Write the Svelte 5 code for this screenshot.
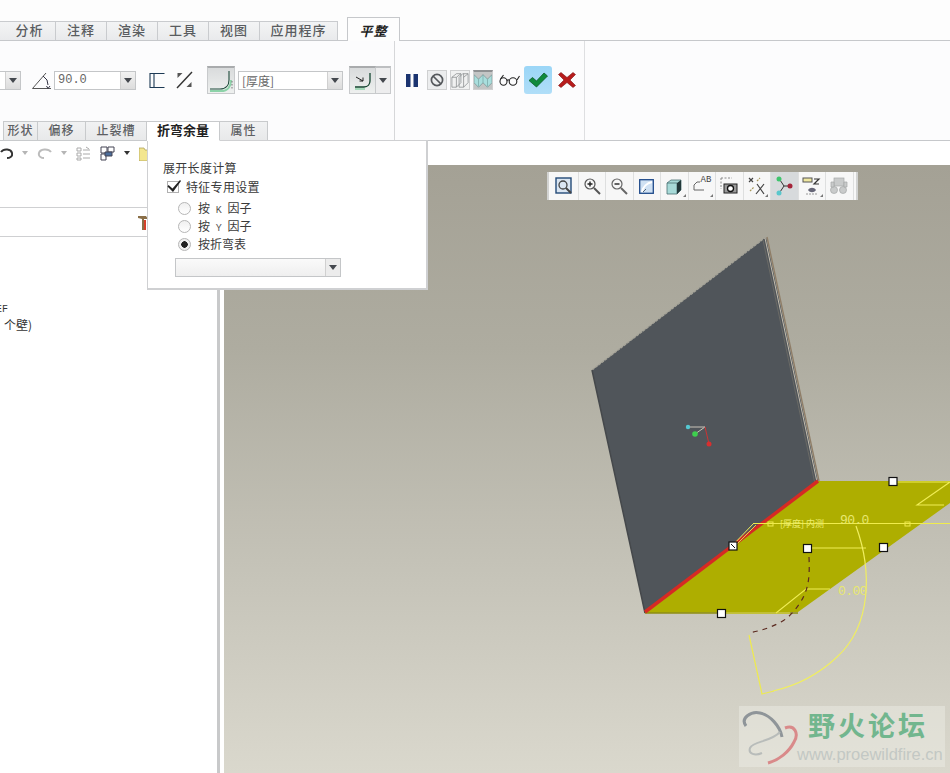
<script>
  const topTabs = [
    { label: '分析', cls: 'first' },
    { label: '注释', cls: '' },
    { label: '渲染', cls: '' },
    { label: '工具', cls: '' },
    { label: '视图', cls: '' },
    { label: '应用程序', cls: 'wide' }
  ];
  const subTabs = [
    { label: '形状', cls: 'cut' },
    { label: '偏移', cls: '' },
    { label: '止裂槽', cls: '' },
    { label: '折弯余量', cls: 'active' },
    { label: '属性', cls: '' }
  ];
</script>

{#snippet arrow()}
  <svg class="arrow" width="8" height="5" viewBox="0 0 8 5"><path d="M0 0h8L4 5z" fill="#44484e" /></svg>
{/snippet}

{#snippet tiny(color)}
  <svg class="arrow" width="6" height="4" viewBox="0 0 6 4"><path d="M0 0h6L3 4z" fill={color} /></svg>
{/snippet}

<div class="page">
  <div class="tabbar">
    {#each topTabs as tab}
      <div class="tab {tab.cls}">{tab.label}</div>
    {/each}
    <div class="tab current">平整</div>
  </div>

  <div class="ribbon">
    <div class="group main">
      <div class="controls">
        <div class="combo stub"><span class="drop">{@render arrow()}</span></div>
        <svg class="angle" width="20" height="20" viewBox="0 0 20 20" fill="none" stroke="#555">
          <path d="M0.500 18.500H19M0.500 18.500L14 3" />
          <path d="M11 6l4 4 1 5" stroke="#334" />
          <path d="M14.500 16l1.500 2.500 2-2.500" stroke="#334" />
        </svg>
        <div class="combo angle-box"><span class="value mono">90.0</span><span class="drop">{@render arrow()}</span></div>
        <svg class="flip-a" width="17" height="17" viewBox="0 0 17 17" fill="none" stroke="#1d3a55" stroke-width="1.100">
          <path d="M15.500 1.500H1v14h14.500M5 1.500v14" />
        </svg>
        <svg class="flip-b" width="17" height="18" viewBox="0 0 17 18" fill="none" stroke="#333">
          <path d="M1 17L16 1" stroke-width="1.400" />
          <path d="M1.500 2h5L1.500 7z" fill="#555" stroke="none" />
          <path d="M15.500 16h-5l5-5z" fill="#555" stroke="none" />
        </svg>
        <div class="toggle wide-t">
          <svg width="24" height="22" viewBox="0 0 24 22" fill="none">
            <path d="M1 19h10c6 0 9-4 9-9V1" stroke="#1d4a3a" stroke-width="1.100" />
            <path d="M1 21h11c7 0 10-5 10-11" stroke="#8cd2a8" stroke-width="2" />
            <path d="M20 1v8" stroke="#777" stroke-dasharray="1.500 1.500" transform="translate(3 10)" />
          </svg>
        </div>
        <div class="combo thick"><span class="value">[厚度]</span><span class="drop">{@render arrow()}</span></div>
        <div class="split">
          <div class="toggle split-main">
            <svg width="18" height="18" viewBox="0 0 18 18" fill="none">
              <path d="M1 15h9c4 0 6-3 6-6V1" stroke="#12442e" stroke-width="1.300" />
              <path d="M2 5l7 4M9 9V5.500M9 9H5.500" stroke="#222" />
              <path d="M1 17h10" stroke="#8cd2a8" stroke-width="1.500" />
            </svg>
          </div>
          <span class="split-drop">{@render arrow()}</span>
        </div>
      </div>
      <div class="subtabs">
        {#each subTabs as tab}
          <div class="subtab {tab.cls}">{tab.label}</div>
        {/each}
      </div>
    </div>

    <div class="group actions">
      <svg class="pause" width="12" height="13" viewBox="0 0 12 13"><path d="M0 0h4.500v13H0zM7.500 0H12v13H7.500z" fill="#1b3470" /></svg>
      <div class="act-btn plain">
        <svg width="14" height="14" viewBox="0 0 14 14" fill="none" stroke="#55585c" stroke-width="1.700"><circle cx="7" cy="7" r="5.600" /><path d="M3 3l8 8" /></svg>
      </div>
      <div class="act-btn plain faint">
        <svg width="20" height="18" viewBox="0 0 20 18" fill="none" stroke="#85888a" stroke-width=".8">
          <path d="M1 6l5-4h5v10l-5 5H1zM1 6h5v11M6 6l5-4M9 6l4-4h6v10l-5 5H9zM13 6h0M14 2v15M14 6l5-4" />
        </svg>
      </div>
      <div class="act-btn pressed">
        <svg width="20" height="15" viewBox="0 0 20 15"><path d="M0 1l5 5 5-5 5 5 5-5v9l-5 5-5-5-5 5-5-5z" fill="#a9dedd" stroke="#6f8c8c" stroke-width=".7" /><path d="M5 6v8M10 1v9M15 6v8" stroke="#6f9c9c" stroke-width=".7" /></svg>
      </div>
      <svg class="glasses" width="21" height="12" viewBox="0 0 21 12" fill="none" stroke="#222" stroke-width="1.100">
        <ellipse cx="4.500" cy="7.500" rx="3.500" ry="3.700" /><ellipse cx="14" cy="7.500" rx="3.800" ry="3.700" />
        <path d="M8 6.500c1-1 1.500-1 2.300 0M1.500 5l3-4M18 6l2.500-4" />
      </svg>
      <div class="ok">
        <svg width="20" height="16" viewBox="0 0 20 16"><path d="M1 8.500l3.500-3 4 3.500L16 1l3.500 3L8.500 15z" fill="#0f8a3c" stroke="#0b5a2a" stroke-width=".8" /></svg>
      </div>
      <svg class="cancel" width="18" height="16" viewBox="0 0 18 16"><path d="M0.500 2.500L3 .5l6 5 6-5 2.500 2-5.500 5.500 5.500 5.500L15 15.500l-6-5-6 5-2.500-2L6 8z" fill="#b81c1c" stroke="#7e1010" stroke-width=".6" /></svg>
    </div>
    <div class="group rest"></div>
  </div>

  <div class="work">
    <aside class="left">
      <div class="quick">
        <svg width="13" height="11" viewBox="0 0 13 11" fill="none" stroke="#333" stroke-width="2"><path d="M1 4c3-4 10-3 11 1s-3 5-5 5" /></svg>
        {@render tiny('#b5b5b5')}
        <svg width="15" height="11" viewBox="0 0 15 11" fill="none" stroke="#bcbcbc" stroke-width="2"><path d="M14 4C11 0 3 1 2 5s3 5 5 5" /></svg>
        {@render tiny('#b5b5b5')}
        <svg width="15" height="15" viewBox="0 0 15 15" fill="none" stroke="#aaa"><path d="M1 2h4v3H1zM1 7h4v3H1zM1 12h4v2H1zM7 4h7M7 8h7M7 12h7M10 1l3 2" /></svg>
        <svg width="15" height="15" viewBox="0 0 15 15" fill="none" stroke="#445"><path d="M1 1h6v6H1zM8 1h6v5H8zM1 8h5v6H1z" /><path d="M5 6h7v4H5z" fill="#4d6f9c" /></svg>
        {@render tiny('#333')}
        <svg width="14" height="16" viewBox="0 0 14 16"><path d="M0 3h5l1 2h8v11H0z" fill="#f3e68f" stroke="#a89a50" stroke-width=".7" /></svg>
      </div>
      <div class="tree-head">
        <svg width="10" height="16" viewBox="0 0 10 16"><path d="M0 2h8l2 3H6v11H4V5L0 4z" fill="#8a6f48" /><path d="M6 6h2v10H6z" fill="#d6402a" /></svg>
      </div>
      <div class="tree">
        <div class="mono-line">EF</div>
        <div class="line">个壁)</div>
      </div>
    </aside>
    <div class="split-bar"></div>
    <main class="view">
      <div class="strip"></div>
      <div class="canvas">
        <div class="viewbar">
          <span class="vb"><svg width="18" height="18" viewBox="0 0 18 18" fill="none"><rect x="1" y="1" width="15" height="15" fill="#dbe6f2" stroke="#244a78" stroke-width="1.400" /><circle cx="8" cy="8" r="4" stroke="#444" stroke-width="1.300" /><path d="M11 11l5 5" stroke="#444" stroke-width="2" /></svg></span>
          <span class="vb"><svg width="18" height="18" viewBox="0 0 18 18" fill="none"><circle cx="7" cy="7" r="5" stroke="#555" stroke-width="1.200" /><path d="M4.500 7h5M7 4.500v5" stroke="#222" stroke-width="1.400" /><path d="M11 11l6 6" stroke="#555" stroke-width="2" /></svg></span>
          <span class="vb"><svg width="18" height="18" viewBox="0 0 18 18" fill="none"><circle cx="7" cy="7" r="5" stroke="#666" stroke-width="1.200" /><path d="M4.500 7h5" stroke="#222" stroke-width="1.400" /><path d="M11 11l6 6" stroke="#666" stroke-width="2" /></svg></span>
          <span class="vb"><svg width="15" height="15" viewBox="0 0 15 15" fill="none"><rect x=".7" y=".7" width="13.600" height="13.600" fill="#cfe1f3" stroke="#1f4a8a" stroke-width="1.300" /><path d="M3 13c1-5 5-9 10-10" stroke="#fff" stroke-width="2" /><path d="M4 13l3-3" stroke="#567" /></svg></span>
          <span class="vb corner"><svg width="17" height="17" viewBox="0 0 17 17"><path d="M1 5l4-3h10v10l-4 4H1z" fill="#a7dad8" stroke="#4a7072" stroke-width=".8" /><path d="M1 5h10v11" fill="none" stroke="#4a7072" stroke-width=".8" /><path d="M11 5l4-3v10l-4 4z" fill="#22383a" /></svg></span>
          <span class="vb corner"><svg width="18" height="16" viewBox="0 0 18 16" fill="none" stroke="#666"><path d="M1 12V7l3-3h3M1 12h10" /></svg><span class="ab">AB</span></span>
          <span class="vb"><svg width="18" height="18" viewBox="0 0 18 18" fill="none"><path d="M1 1h11M1 1v11" stroke="#888" stroke-dasharray="2 1.500" /><rect x="4" y="7" width="13" height="9" fill="#999" stroke="#222" /><circle cx="10.500" cy="11.500" r="3" fill="#fff" stroke="#111" stroke-width="1.300" /></svg></span>
          <span class="vb corner"><svg width="18" height="18" viewBox="0 0 18 18" fill="none" stroke="#444" stroke-width="1.200"><path d="M1 1l4 4M5 1L1 5M9 7l7 10M16 7L8 17" /><path d="M2 14l4-4M9 4l3-3" stroke="#a8985a" stroke-dasharray="2 1" /></svg></span>
          <span class="vb on"><svg width="18" height="20" viewBox="0 0 18 20" fill="none"><path d="M5 4l4 6-4 6M9 10h6" stroke="#333" /><circle cx="4" cy="3" r="2.500" fill="#3ec46d" /><circle cx="4" cy="17" r="2.500" fill="#59c7cc" /><circle cx="15" cy="10" r="2.500" fill="#a5243a" /></svg></span>
          <span class="vb corner"><svg width="19" height="19" viewBox="0 0 19 19" fill="none"><rect x="1" y="1" width="9" height="4" fill="#efe7a0" stroke="#555" /><path d="M12 2h5l-5 5h5" stroke="#333" stroke-width="1.200" /><path d="M6 13c2-3 6-3 8 0-2 3-6 3-8 0z" fill="#667" /><path d="M4 17h11" stroke="#999" stroke-dasharray="2 1" /></svg></span>
          <span class="vb"><svg width="18" height="18" viewBox="0 0 18 18" fill="#c9cbcb" stroke="#a5a8a8" stroke-width=".7"><rect x="4" y="1" width="10" height="8" /><circle cx="4" cy="13" r="3.500" /><circle cx="13" cy="13" r="3.500" /><path d="M1 5h3v5H1zM14 5h3v5h-3z" /></svg></span>
        </div>

        <svg class="model" width="726" height="608" viewBox="224 165 726 608" fill="none">
          <polygon points="592,370 766,237 818,481 645,613" fill="#50555a" />
          <path d="M592 370L766 237" stroke="#a5a398" stroke-width="1.300" stroke-dasharray="3 1" />
          <path d="M767 237L819 481" stroke="#8f7e68" stroke-width="1.400" />
          <path d="M765 238L817 482" stroke="#c4bdae" stroke-width="1" />
          <path d="M763 240L815 484" stroke="#6a6a66" />
          <path d="M592 370L645 613" stroke="#45484b" stroke-width="1.500" />
          <polygon points="818,481 950,481 950,503 798,612 645,613" fill="#aeae00" />
          <path d="M645 613H798" stroke="#8c8c10" stroke-width="1.500" />
          <path d="M645 612L818 481" stroke="#d62a24" stroke-width="3.500" />
          <path d="M730 548l24-25" stroke="#f2ef5a" />
          <path d="M733 548l23-23" stroke="#d8d64a" />
          <path d="M754 523.500H950" stroke="#f0ec4c" />
          <rect x="768" y="522" width="5" height="4" stroke="#efea4c" />
          <rect x="905" y="522" width="5" height="4" stroke="#efea4c" />
          <path d="M893 482H950L917 505H944" stroke="#f0ed55" stroke-width="1.100" />
          <path d="M807 548H866" stroke="#f0ed55" stroke-width="1.100" />
          <path d="M776 613L806 589H830" stroke="#f0ed55" stroke-width="1.100" />
          <path d="M721 613H790" stroke="#e8e53c" />
          <path d="M856 526C872 570 872 625 837 657C820 673 800 685 773 691" stroke="#f0ee60" stroke-width="1.200" />
          <path d="M749 635L762 694L774 691" stroke="#eeea50" stroke-width="1.200" />
          <path d="M809 557C810 580 808 590 800 603C795 610 790 617 781 622C770 628 760 631 748 633" stroke="#5c2a20" stroke-width="1.200" stroke-dasharray="5 5" />
          <path d="M688 427h17M705 427l-10 7" stroke="#c9c4b8" />
          <path d="M705 427l4 17" stroke="#c33" />
          <circle cx="688" cy="427" r="2.200" fill="#55c8d2" />
          <circle cx="695" cy="434" r="2.800" fill="#3ecf4e" />
          <circle cx="709" cy="444" r="2.500" fill="#d82f2f" />
          <text x="780" y="527" class="dim">[厚度] 内测</text>
          <text x="840" y="524" class="num">90.0</text>
          <text x="838" y="595" class="num">0.00</text>
          <g fill="#fff" stroke="#111" stroke-width="1.200">
            <rect x="889" y="477.500" width="8" height="8" />
            <rect x="729" y="542" width="8" height="8" />
            <rect x="803.500" y="544.500" width="8" height="8" />
            <rect x="879.500" y="543.500" width="8" height="8" />
            <rect x="717.500" y="609.500" width="8" height="8" />
          </g>
          <path d="M731 544l4 4" stroke="#111" />
        </svg>

        <div class="mark">
          <svg class="logo" width="66" height="61" viewBox="0 0 66 61" fill="none">
            <path d="M7 20C1 12 12 5 21 7C31 9 41 20 43 31" stroke="#8f9599" stroke-width="3" />
            <path d="M41 26C32 36 14 35 11 42C9 48 16 50 23 47" stroke="#b8bcba" stroke-width="2" />
            <path d="M46 22C56 18 60 28 55 36C50 46 40 54 29 57" stroke="#d98a8a" stroke-width="3" />
          </svg>
          <div class="mark-text">
            <div class="mark-name">野火论坛</div>
            <div class="mark-url">www.proewildfire.cn</div>
          </div>
        </div>
      </div>
    </main>
  </div>

  <div class="popup">
    <div class="pop-title">展开长度计算</div>
    <div class="check">
      <span class="box">
        <svg width="15" height="14" viewBox="0 0 15 14"><path d="M1.500 6l4 3.500L13 1l1 1-8 11L.5 7.500z" fill="#222" /></svg>
      </span>
      特征专用设置
    </div>
    <div class="radios">
      <div class="radio"><span class="dot"></span><span class="wide-txt">按 <i>K</i> 因子</span></div>
      <div class="radio"><span class="dot"></span><span class="wide-txt">按 <i>Y</i> 因子</span></div>
      <div class="radio"><span class="dot picked"></span><span>按折弯表</span></div>
    </div>
    <div class="combo table-box"><span class="value"></span><span class="drop">{@render arrow()}</span></div>
  </div>
</div>

<style>
  :global(body) {
    margin: 0;
    overflow: hidden;
    background: #fff;
  }

  .page {
    position: relative;
    display: flex;
    flex-direction: column;
    width: 950px;
    height: 773px;
    overflow: hidden;
    font: 12px "Noto Sans CJK SC", "Liberation Sans", sans-serif;
    color: #333;
    background: #fff;
  }

  .tabbar {
    display: flex;
    align-items: flex-end;
    flex: none;
    height: 40px;
    background: #fdfdfd;
    border-bottom: 1px solid #c6c8cb;
  }

  .tab {
    box-sizing: border-box;
    width: 51px;
    height: 19px;
    border-right: 1px solid #c9cbce;
    border-top: 1px solid #c9cbce;
    background: linear-gradient(#f3f4f5, #e9eaec);
    color: #595c60;
    font-size: 13px;
    font-weight: 500;
    line-height: 15px;
    letter-spacing: 1px;
    text-align: center;
  }

  .tab.first {
    width: 56px;
    padding-left: 4px;
  }

  .tab.wide {
    width: 78px;
  }

  .tab.current {
    width: 53px;
    height: 24px;
    margin: 0 0 -1px 9px;
    border: 1px solid #c6c8cb;
    border-bottom: 0;
    background: #fdfdfd;
    color: #222;
    font-style: italic;
    font-weight: 700;
    line-height: 26px;
  }

  .ribbon {
    display: flex;
    flex: none;
    height: 100px;
    box-sizing: border-box;
    background: #fcfcfd;
    border-bottom: 1px solid #c6c8cb;
  }

  .group {
    box-sizing: border-box;
    height: 99px;
  }

  .main {
    display: flex;
    flex-direction: column;
    justify-content: space-between;
    width: 395px;
    border-right: 1px solid #d6d7d9;
  }

  .controls {
    display: flex;
    align-items: center;
    height: 78px;
  }

  .combo {
    display: flex;
    box-sizing: border-box;
    height: 19px;
    background: #fff;
    border: 1px solid #c4c6c8;
  }

  .combo .value {
    flex: 1;
    padding-left: 3px;
    color: #666;
    line-height: 17px;
  }

  .mono {
    font-family: "Liberation Mono", "DejaVu Sans Mono", monospace;
    font-size: 12px;
  }

  .combo .drop {
    display: flex;
    align-items: center;
    justify-content: center;
    width: 14px;
    background: linear-gradient(#f2f2f2, #dcdcdc);
    border-left: 1px solid #d0d0d0;
  }

  .arrow {
    flex: none;
  }

  .stub {
    width: 21px;
    border-left: 0;
    justify-content: flex-end;
  }

  .angle {
    margin-left: 11px;
  }

  .angle-box {
    width: 82px;
    margin-left: 2px;
  }

  .flip-a {
    margin-left: 13px;
  }

  .flip-b {
    margin-left: 10px;
  }

  .toggle {
    display: flex;
    align-items: center;
    justify-content: center;
    box-sizing: border-box;
    background: linear-gradient(#d9dbdc, #eef0ef);
    border: 1px solid #c8cacc;
    border-top: 2px solid #a9abad;
  }

  .wide-t {
    width: 28px;
    height: 28px;
    margin-left: 14px;
  }

  .thick {
    width: 105px;
    margin-left: 3px;
  }

  .split {
    display: flex;
    height: 28px;
    margin-left: 6px;
  }

  .split-main {
    width: 27px;
  }

  .split-drop {
    display: flex;
    align-items: center;
    justify-content: center;
    box-sizing: border-box;
    width: 15px;
    background: #ededee;
    border: 1px solid #c8cacc;
    border-left: 0;
    border-top: 2px solid #bdbfc1;
  }

  .subtabs {
    display: flex;
    align-items: flex-end;
    height: 20px;
    padding-left: 3px;
    margin-bottom: -1px;
  }

  .subtab {
    box-sizing: border-box;
    width: 48px;
    height: 20px;
    border: 1px solid #c8cacc;
    border-left: 0;
    background: linear-gradient(#f1f2f3, #e8e9ea);
    color: #5d6063;
    font-size: 12px;
    font-weight: 500;
    line-height: 15px;
    letter-spacing: 1px;
    text-align: center;
  }

  .subtab.cut {
    width: 35px;
    border-left: 1px solid #c8cacc;
  }

  .subtab:nth-child(3) {
    width: 61px;
  }

  .subtab.active {
    position: relative;
    z-index: 3;
    width: 73px;
    border-bottom-color: #fff;
    background: #fff;
    color: #222;
    font-size: 13px;
    font-weight: 700;
    letter-spacing: 0;
  }

  .group.actions {
    display: flex;
    align-items: center;
    width: 190px;
    height: 99px;
    padding-bottom: 21px;
    padding-left: 11px;
    border-right: 1px solid #dedfe1;
  }

  .rest {
    flex: 1;
    height: 98px;
  }

  .act-btn {
    display: flex;
    align-items: center;
    justify-content: center;
    box-sizing: border-box;
    width: 20px;
    height: 20px;
    margin-left: 3px;
    border: 1px solid #cfd0d1;
    background: #ecedee;
  }

  .act-btn.plain:first-of-type {
    margin-left: 9px;
  }

  .act-btn.faint {
    background: #f0f1f1;
  }

  .act-btn.pressed {
    background: #c3c5c5;
    border-top: 2px solid #8f9193;
  }

  .glasses {
    margin-left: 6px;
  }

  .ok {
    display: flex;
    align-items: center;
    justify-content: center;
    width: 28px;
    height: 28px;
    margin-left: 4px;
    border-radius: 3px;
    background: linear-gradient(#9bd6f7, #b0def8);
  }

  .cancel {
    margin-left: 6px;
  }

  .work {
    display: flex;
    flex: 1;
    min-height: 0;
  }

  .left {
    display: flex;
    flex-direction: column;
    flex: none;
    width: 217px;
    background: #fff;
  }

  .quick {
    display: flex;
    align-items: center;
    gap: 9px;
    box-sizing: border-box;
    height: 67px;
    padding: 0 0 42px 0;
    border-bottom: 1px solid #cfd0d2;
    overflow: hidden;
  }

  .tree-head {
    display: flex;
    justify-content: flex-end;
    align-items: center;
    box-sizing: border-box;
    height: 29px;
    padding-right: 69px;
    border-bottom: 1px solid #cfd0d2;
  }

  .tree {
    padding-top: 65px;
    font-size: 12px;
    line-height: 15px;
  }

  .tree .line {
    margin-left: 4px;
  }

  .mono-line {
    margin-left: -4px;
    font-family: "Liberation Mono", "DejaVu Sans Mono", monospace;
    font-size: 10px;
  }

  .split-bar {
    flex: none;
    width: 3px;
    margin-right: 4px;
    background: #c8c9ca;
  }

  .view {
    display: flex;
    flex-direction: column;
    flex: 1;
  }

  .strip {
    flex: none;
    height: 24px;
    background: #fff;
  }

  .canvas {
    position: relative;
    flex: 1;
    background: linear-gradient(#a4a195, #aeaca0 30%, #c4c2b7 65%, #dad8cd);
  }

  .viewbar {
    position: absolute;
    top: 7px;
    left: 323px;
    display: flex;
    box-sizing: border-box;
    height: 28px;
    padding: 0 2px;
    background: #f7f7f7;
    border-right: 2px solid #d2d3d2;
    border-left: 2px solid #d2d3d2;
  }

  .vb {
    position: relative;
    display: flex;
    align-items: center;
    justify-content: center;
    width: 27.500px;
    border-right: 1px solid #dedfdf;
    box-sizing: border-box;
  }

  .vb.on {
    background: #d7dadc;
  }

  .vb.corner::after {
    content: "";
    position: absolute;
    right: 2px;
    bottom: 3px;
    border-left: 3px solid transparent;
    border-bottom: 3px solid #777;
  }

  .ab {
    position: absolute;
    top: 3px;
    left: 12px;
    font: 9px "Liberation Mono", monospace;
    color: #444;
  }

  .model {
    position: absolute;
    inset: 0;
  }

  .num {
    fill: #e8e870;
    font: 13px "Liberation Mono", "DejaVu Sans Mono", monospace;
    letter-spacing: -.6px;
  }

  .dim {
    fill: #eeee70;
    font: 9px "Noto Sans CJK SC", sans-serif;
  }

  .mark {
    position: absolute;
    right: 5px;
    bottom: 6px;
    display: flex;
    box-sizing: border-box;
    width: 206px;
    height: 61px;
    background: rgba(236, 236, 228, .5);
  }

  .logo {
    flex: none;
  }

  .mark-text {
    flex: none;
    width: 140px;
    white-space: nowrap;
  }

  .mark-name {
    padding: 3px 0 0 3px;
    color: #72b68e;
    font-size: 27px;
    font-weight: 700;
    line-height: 32px;
    letter-spacing: 3px;
  }

  .mark-url {
    margin: 4px 0 0 -8px;
    color: #c3c8c4;
    font: 16.500px/19px "Liberation Sans", sans-serif;
  }

  .popup {
    position: absolute;
    top: 140px;
    left: 147px;
    z-index: 2;
    box-sizing: border-box;
    width: 281px;
    height: 150px;
    padding: 18px 0 0 15px;
    background: #fff;
    border: 1px solid #cfd0d2;
    border-width: 1px 2px 2px 1px;
    color: #3a3a3a;
    line-height: 18px;
  }

  .check {
    display: flex;
    align-items: center;
    gap: 7px;
    margin: 1px 0 0 4px;
    letter-spacing: .3px;
  }

  .pop-title {
    letter-spacing: .3px;
  }

  .box {
    position: relative;
    display: block;
    box-sizing: border-box;
    width: 12px;
    height: 12px;
    background: #fff;
    border: 1px solid #b0b0b0;
  }

  .box svg {
    position: absolute;
    top: -3px;
    left: -1px;
  }

  .radios {
    margin: 3px 0 0 15px;
  }

  .radio {
    display: flex;
    align-items: center;
    gap: 7px;
    height: 18px;
  }

  .wide-txt {
    word-spacing: 3px;
  }

  .wide-txt i {
    font: normal 10px "Liberation Mono", monospace;
    color: #555;
  }

  .dot {
    display: flex;
    box-sizing: border-box;
    width: 13px;
    height: 13px;
    border: 1px solid #b6b6b6;
    border-radius: 50%;
    background: linear-gradient(#f0f0f0, #fff);
  }

  .dot.picked {
    background: radial-gradient(circle, #222 0 3px, #f0f0f0 3.500px);
  }

  .table-box {
    width: 166px;
    margin: 5px 0 0 12px;
    background: linear-gradient(#fafafa, #efefef);
  }

  .table-box .drop {
    background: #ececec;
  }
</style>
